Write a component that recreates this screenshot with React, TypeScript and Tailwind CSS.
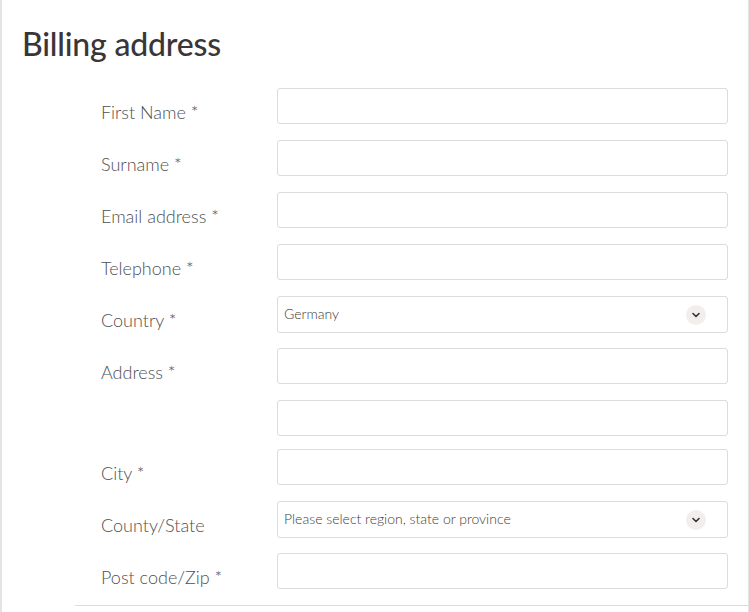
import React from 'react';

type Row = { label: string; kind?: 'input' | 'select'; value?: string };

const rows: Row[] = [
  { label: 'First Name *' },
  { label: 'Surname *' },
  { label: 'Email address *' },
  { label: 'Telephone *' },
  { label: 'Country *', kind: 'select', value: 'Germany' },
  { label: 'Address *' },
  { label: '' },
  { label: 'City *' },
  { label: 'County/State', kind: 'select', value: 'Please select region, state or province' },
  { label: 'Post code/Zip *' },
];

const Chevron = () => (
  <span className="flex h-[20px] w-[20px] items-center justify-center rounded-full bg-[#f1eeec]">
    <svg width="8" height="6" viewBox="0 0 8 6" fill="none">
      <path d="M1 1.5 L4 4.5 L7 1.5" stroke="#333" strokeWidth="1.6" strokeLinecap="round" strokeLinejoin="round" />
    </svg>
  </span>
);

// spacing below each row, taken from the screenshot
const gapFor = (row: Row, i: number) => {
  if (i === rows.length - 1) return '';
  if (i === 6) return 'mb-[13px]';
  return row.kind === 'select' ? 'mb-[15px]' : 'mb-[16px]';
};

export default function App() {
  return (
    <div
      className="relative h-[612px] w-[749px] overflow-hidden border-l-2 border-r border-[#e4e4e4] bg-white"
      style={{ fontFamily: 'Lato, "Open Sans", sans-serif' }}
    >
      <h1 className="pl-[20px] pt-[24px] text-[32px] font-medium leading-[40px] tracking-[-0.2px] text-[#3a3638]">
        Billing address
      </h1>

      <div className="mt-[24px] flex flex-col pl-[99px]">
        {rows.map((row, i) => (
          <div key={i} className={`flex items-start ${gapFor(row, i)}`}>
            <div className="h-[36px] w-[176px] pt-[13px] text-[18px] font-light leading-[23px] text-[#505050]">
              {row.label}
            </div>
            {row.kind === 'select' ? (
              <div className="flex h-[37px] w-[451px] items-center justify-between rounded-[3px] border border-[#dcdcdc] pl-[6px] pr-[21px]">
                <span className="pb-[2px] text-[14px] font-light text-[#3c3c3c]">{row.value}</span>
                <Chevron />
              </div>
            ) : (
              <div className="h-[36px] w-[451px] rounded-[3px] border border-[#dcdcdc]" />
            )}
          </div>
        ))}
      </div>

      <div className="ml-[73px] mt-[16px] border-t border-[#dcdcdc]" />
    </div>
  );
}
